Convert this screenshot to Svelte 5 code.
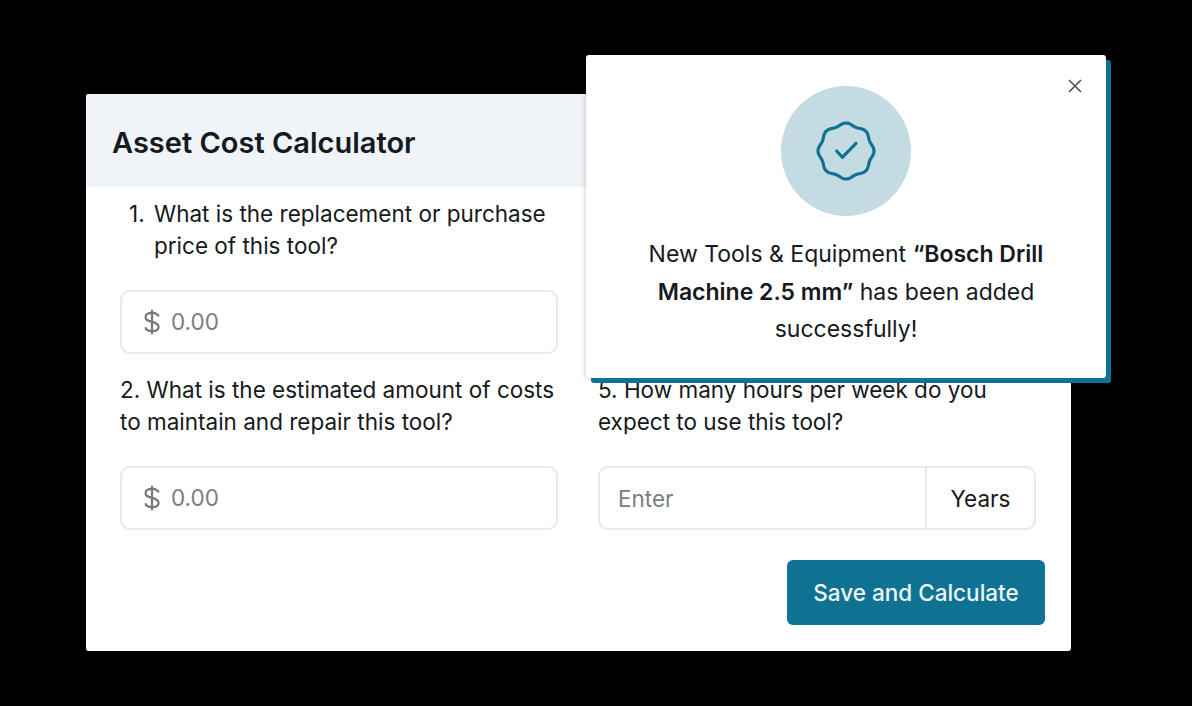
<script>
  // wavy seal outline for the success badge, r = base + wave * cos(n * angle)
  const sealPoints = []
  for (let i = 0; i < 240; i++) {
    const a = (i / 240) * Math.PI * 2
    const r = 26.8 + 1.2 * Math.cos(8 * a)
    sealPoints.push(`${(30 + r * Math.sin(a)).toFixed(2)} ${(30 - r * Math.cos(a)).toFixed(2)}`)
  }
  const sealPath = `M${sealPoints.join('L')}Z`
</script>

<div class="page">
  <div class="stage">
    <section class="card">
      <header class="card-head">
        <h1>Asset Cost Calculator</h1>
      </header>
      <div class="form">
        <div class="field">
          <p class="question first"><span class="num">1.</span>What is the replacement or purchase price of this tool?</p>
          <div class="input">
            <svg class="dollar" viewBox="0 0 18 26" aria-hidden="true">
              <path d="M15.6 7.6C15 5 12.4 3.8 9 3.8 5.4 3.8 2.6 5.4 2.6 8.2c0 3 3 3.8 6.4 4.7 3.6 1 6.6 1.9 6.6 5 0 2.8-2.9 4.2-6.6 4.2-3.5 0-6.1-1.3-6.7-3.9M9 .8v24.4" />
            </svg>
            <span class="placeholder">0.00</span>
          </div>
        </div>
        <div class="field"></div>
        <div class="field">
          <p class="question">2. What is the estimated amount of costs to maintain and repair this tool?</p>
          <div class="input">
            <svg class="dollar" viewBox="0 0 18 26" aria-hidden="true">
              <path d="M15.6 7.6C15 5 12.4 3.8 9 3.8 5.4 3.8 2.6 5.4 2.6 8.2c0 3 3 3.8 6.4 4.7 3.6 1 6.6 1.9 6.6 5 0 2.8-2.9 4.2-6.6 4.2-3.5 0-6.1-1.3-6.7-3.9M9 .8v24.4" />
            </svg>
            <span class="placeholder">0.00</span>
          </div>
        </div>
        <div class="field">
          <p class="question">5. How many hours per week do you expect to use this tool?</p>
          <div class="input split">
            <span class="placeholder">Enter</span>
            <span class="unit">Years</span>
          </div>
        </div>
      </div>
      <div class="actions">
        <button class="save">Save and Calculate</button>
      </div>
    </section>

    <div class="popup">
      <button class="close" aria-label="Close">
        <svg viewBox="0 0 14 14"><path d="M1 1l12 12M13 1L1 13" /></svg>
      </button>
      <div class="badge">
        <svg viewBox="0 0 60 60" aria-hidden="true">
          <path d={sealPath} />
          <path d="M20.7 30l5.6 6.3L40 22.3" />
        </svg>
      </div>
      <p class="message">New Tools &amp; Equipment <strong>“Bosch Drill Machine 2.5 mm”</strong> has been added successfully!</p>
    </div>
  </div>
</div>

<style>
  :global(body) {
    margin: 0;
    background: #000;
  }

  .page {
    width: 1192px;
    height: 706px;
    box-sizing: border-box;
    padding: 94px 0 0 86px;
    background: #000;
    font-family: Inter, "Liberation Sans", sans-serif;
    color: #16191d;
    overflow: hidden;
  }

  .stage {
    position: relative;
    width: 985px;
  }

  .card {
    background: #fff;
    border-radius: 3px;
    height: 557px;
    overflow: hidden;
  }

  .card-head {
    background: #f0f4f8;
    height: 93px;
    padding: 4px 0 0 26px;
    box-sizing: border-box;
    display: flex;
    align-items: center;
  }

  h1 {
    margin: 0;
    font-size: 29px;
    font-weight: 600;
  }

  .form {
    display: grid;
    grid-template-columns: 438px 438px;
    column-gap: 40px;
    padding: 11px 34px 0;
  }

  .question {
    margin: 0;
    font-size: 22.5px;
    line-height: 32px;
    height: 64px;
  }

  .question.first {
    padding-left: 34px;
    text-indent: -25px;
  }

  .num {
    display: inline-block;
    width: 25px;
    text-indent: 0;
  }

  .input {
    margin: 28px 0 20px;
    height: 64px;
    box-sizing: border-box;
    border: 2px solid #e8e9eb;
    border-radius: 10px;
    display: flex;
    align-items: center;
    padding: 0 0 2px 21px;
  }

  .input.split {
    padding: 0 0 0 18px;
    justify-content: space-between;
  }

  .dollar {
    width: 18px;
    height: 26px;
    margin: 2px 10px 0 0;
    fill: none;
    stroke: #74777a;
    stroke-width: 2.2;
  }

  .placeholder {
    font-size: 22.5px;
    color: #7b7e80;
  }

  .unit {
    height: 100%;
    width: 109px;
    box-sizing: border-box;
    border-left: 2px solid #e8e9eb;
    font-size: 22.5px;
    display: flex;
    align-items: center;
    justify-content: center;
  }

  .actions {
    display: flex;
    justify-content: flex-end;
    padding: 10px 26px 0 0;
  }

  .save {
    width: 258px;
    height: 65px;
    border: 0;
    border-radius: 6px;
    background: #0f7293;
    color: #eef6f8;
    font: 500 22.5px Inter, "Liberation Sans", sans-serif;
  }

  .popup {
    position: absolute;
    left: 500px;
    top: -39px;
    width: 520px;
    height: 323px;
    background: #fff;
    border-radius: 3px;
    box-shadow: 5px 5px 0 #0f7293, -1px 1px 4px rgba(0, 0, 0, 0.18);
    display: flex;
    flex-direction: column;
    align-items: center;
    padding-top: 31px;
    box-sizing: border-box;
  }

  .close {
    position: absolute;
    top: 24px;
    right: 24px;
    width: 14px;
    height: 14px;
    padding: 0;
    border: 0;
    background: none;
  }

  .close svg {
    display: block;
    fill: none;
    stroke: #4d5257;
    stroke-width: 1.6;
  }

  .badge {
    width: 130px;
    height: 130px;
    border-radius: 50%;
    background: #c5dbe4;
    display: flex;
    align-items: center;
    justify-content: center;
  }

  .badge svg {
    width: 60px;
    height: 60px;
    fill: none;
    stroke: #0f7293;
    stroke-width: 3.2;
    stroke-linecap: round;
    stroke-linejoin: round;
  }

  .message {
    margin: 20px 0 0;
    width: 430px;
    font-size: 23px;
    line-height: 37.5px;
    text-align: center;
  }

  strong {
    font-weight: 600;
  }
</style>
